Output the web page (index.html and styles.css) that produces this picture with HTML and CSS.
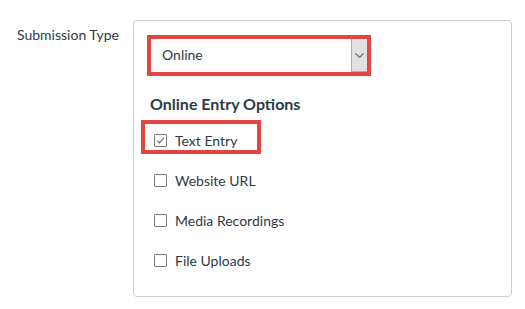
FILE: index.html
```html
<!DOCTYPE html>
<html lang="en">
<head>
    <meta charset="UTF-8">
    <meta name="viewport" content="width=device-width, initial-scale=1.0">
    <title>Submission Type</title>
    <link rel="stylesheet" href="styles.css">
</head>
<body>
    <div class="form-row">
        <div class="form-label">Submission Type</div>
        <div class="form-box">
            <div class="select-mark">
                <div class="select">
                    <span class="select-value">Online</span>
                    <span class="select-arrow">
                        <svg width="9" height="5" viewBox="0 0 9 5"><path d="M0.5 0.5 L4.5 4.3 L8.5 0.5" fill="none" stroke="#666" stroke-width="1.1"/></svg>
                    </span>
                </div>
            </div>
            <h3 class="options-title">Online Entry Options</h3>
            <div class="option option-marked">
                <span class="check checked">
                    <svg width="11" height="11" viewBox="0 0 11 11"><path d="M2.2 5.6 L4.4 7.8 L8.8 2.8" fill="none" stroke="#666" stroke-width="1.2"/></svg>
                </span>
                <span>Text Entry</span>
            </div>
            <div class="option">
                <span class="check"></span>
                <span>Website URL</span>
            </div>
            <div class="option">
                <span class="check"></span>
                <span>Media Recordings</span>
            </div>
            <div class="option">
                <span class="check"></span>
                <span>File Uploads</span>
            </div>
        </div>
    </div>
</body>
</html>
```

FILE: styles.css
```css
body {
    margin: 0;
    background-color: #fff;
    font-family: Lato, "Open Sans", sans-serif;
    font-size: 14px;
    color: #2d3b45;
}

.form-row {
    display: flex;
    padding: 20px 0 0 17px;
}

.form-label {
    width: 116px;
    padding-top: 6px;
    font-size: 14px;
}

.form-box {
    box-sizing: border-box;
    width: 379px;
    height: 277px;
    border: 1px solid #c7cdd1;
    border-radius: 4px;
    padding: 14px 0 0 7px;
}

.select-mark {
    box-sizing: border-box;
    width: 224px;
    height: 41px;
    margin-left: 6px;
    border: 4px solid #e2453f;
}

.select {
    display: flex;
    height: 100%;
    background-color: #fff;
}

.select-value {
    flex: 1;
    padding: 0 0 0 11px;
    line-height: 32px;
}

.select-arrow {
    box-sizing: border-box;
    width: 16px;
    display: flex;
    align-items: center;
    justify-content: center;
    background-color: #e1e1e1;
    border-left: 1px solid #adadad;
    border-bottom: 1px solid #adadad;
}

.options-title {
    margin: 18px 0 6px 9px;
    font-size: 16px;
    font-weight: bold;
    line-height: 20px;
}

.option {
    box-sizing: border-box;
    display: flex;
    align-items: center;
    gap: 8px;
    height: 34px;
    margin-bottom: 6px;
    padding: 7px 0 0 9px;
    border: 4px solid transparent;
    line-height: 19px;
}

.option-marked {
    width: 120px;
    border-color: #e2453f;
}

.check {
    box-sizing: border-box;
    width: 13px;
    height: 13px;
    border: 1px solid #7a7a7a;
    border-radius: 1px;
    display: flex;
    align-items: center;
    justify-content: center;
}
```
